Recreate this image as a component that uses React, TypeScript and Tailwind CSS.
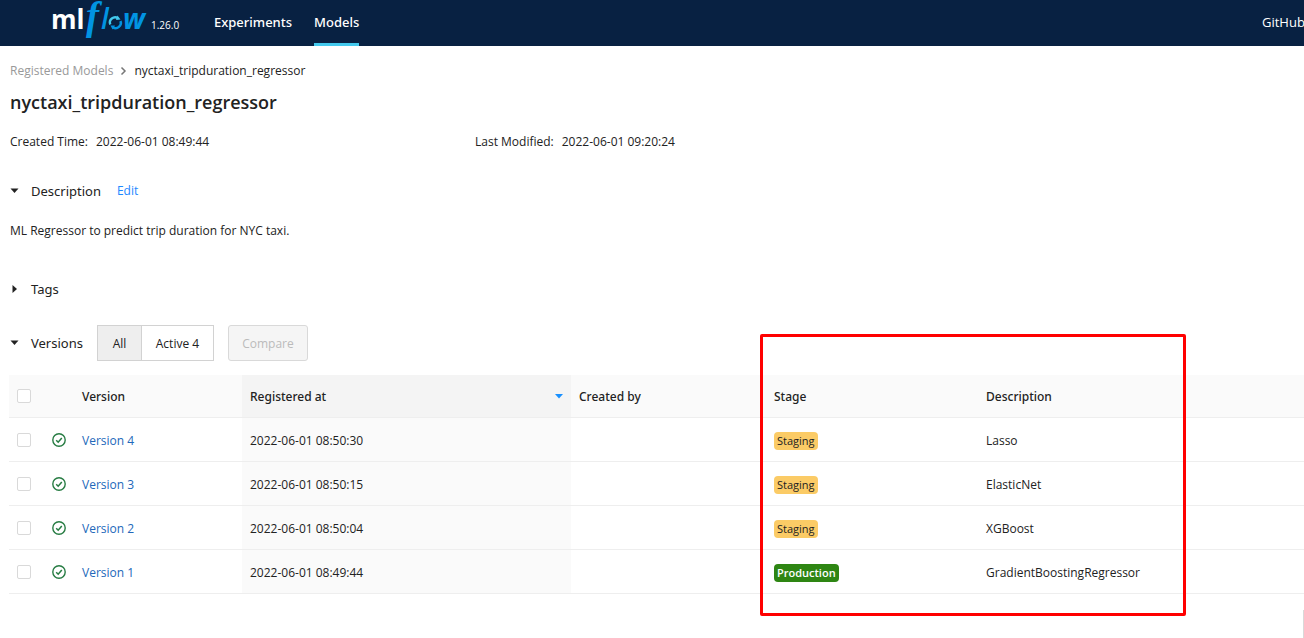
import React from "react";

type Stage = "Staging" | "Production";

interface ModelVersion {
  version: number;
  registeredAt: string;
  stage: Stage;
  description: string;
}

const versions: ModelVersion[] = [
  { version: 4, registeredAt: "2022-06-01 08:50:30", stage: "Staging", description: "Lasso" },
  { version: 3, registeredAt: "2022-06-01 08:50:15", stage: "Staging", description: "ElasticNet" },
  { version: 2, registeredAt: "2022-06-01 08:50:04", stage: "Staging", description: "XGBoost" },
  { version: 1, registeredAt: "2022-06-01 08:49:44", stage: "Production", description: "GradientBoostingRegressor" },
];

const checkboxClass =
  "block h-[14px] w-[14px] appearance-none rounded-[2px] border border-[#d9d9d9] bg-white checked:bg-[#1890ff]";

const headingClass = "px-2 pt-px font-['Noto_Sans',sans-serif] font-medium";

function Logo() {
  return (
    <svg width="96" height="46" viewBox="0 0 96 46" role="img" aria-label="mlflow" className="block shrink-0 overflow-visible">
      <text x="-1" y="29" fontFamily="Open Sans, sans-serif" fontSize="26" fontWeight="700" fill="#fff">
        ml
      </text>
      <text x="34" y="29" fontFamily="Liberation Serif, serif" fontSize="39" fontStyle="italic" fontWeight="700" fill="#0194e2">
        f
      </text>
      <text x="49" y="29" fontFamily="Open Sans, sans-serif" fontSize="28" fontStyle="italic" fontWeight="600" fill="#0194e2">
        l
      </text>
      <g fill="none" strokeWidth="2.4">
        <path d="M58.300 24.500A5.200 5.200 0 0 1 66 18.200" stroke="#43c9ed" />
        <path d="M68.500 21A5.200 5.200 0 0 1 60.800 27.200" stroke="#0194e2" />
      </g>
      <path d="M65.500 15.500L68.500 19.500L64 20Z" fill="#43c9ed" />
      <path d="M58.500 25.500L63 25.500L60.500 29.500Z" fill="#0194e2" />
      <text x="71" y="29" fontFamily="Open Sans, sans-serif" fontSize="28" fontStyle="italic" fontWeight="700" fill="#0194e2">
        w
      </text>
    </svg>
  );
}

function Caret({ open }: { open: boolean }) {
  return (
    <svg width="9" height="10" viewBox="0 0 9 10" aria-hidden="true" className="shrink-0 fill-[#222]">
      {open ? <path d="M0.500 2.500H8.500L4.500 7Z" /> : <path d="M2.500 1L7 5L2.500 9Z" />}
    </svg>
  );
}

function SectionToggle({ title, open }: { title: string; open: boolean }) {
  return (
    <button type="button" aria-expanded={open} className="flex items-center gap-3 font-['Noto_Sans',sans-serif] text-[13px] leading-5">
      <Caret open={open} />
      {title}
    </button>
  );
}

function CheckCircle() {
  return (
    <svg width="14" height="14" viewBox="0 0 14 14" fill="none" stroke="#277c43" role="img" aria-label="Ready" className="block">
      <circle cx="7" cy="7" r="6.200" strokeWidth="1.400" />
      <path d="M4.200 7.200L6.200 9.200L9.800 4.900" strokeWidth="1.500" />
    </svg>
  );
}

function StageTag({ stage }: { stage: Stage }) {
  return stage === "Staging" ? (
    <span className="block h-[18px] w-fit rounded bg-[#fbcb66] px-[3px] text-[11px] leading-[17px]">{stage}</span>
  ) : (
    <span className="block h-[18px] w-fit rounded bg-[#2e8613] px-[3px] text-[11px] font-semibold leading-[17px] text-white">
      {stage}
    </span>
  );
}

export default function App() {
  return (
    <div className="overflow-hidden bg-white font-['Open_Sans',sans-serif] text-xs text-[#222]">
      <header className="flex h-[46px] bg-[#082142] pl-[52px] text-[13px] text-white">
        <Logo />
        <span className="ml-[3px] w-8 pt-[17px] text-[10px] leading-4">1.26.0</span>
        <nav className="ml-[31px] flex gap-[22px] font-['Noto_Sans',sans-serif] font-medium">
          <a href="#experiments" className="leading-[44px]">Experiments</a>
          <a href="#models" aria-current="page" className="border-b-[3px] border-[#43c9ed] leading-[44px]">Models</a>
        </nav>
        <a href="#github" className="ml-auto w-[42px] overflow-hidden whitespace-nowrap leading-[44px]">GitHub</a>
      </header>

      <main className="pl-[9px]">
        <div className="pl-px">
          <nav aria-label="Breadcrumb" className="flex items-center gap-[7px] pt-4 leading-[18px]">
            <a href="#registered" className="text-[#999]">Registered Models</a>
            <svg width="7" height="10" viewBox="0 0 7 10" fill="none" stroke="#777" strokeWidth="1.500" aria-hidden="true">
              <path d="M1.500 1.500L5 5L1.500 8.500" />
            </svg>
            <span>nyctaxi_tripduration_regressor</span>
          </nav>
          <h1 className="pt-2 text-[18px] font-semibold leading-7">nyctaxi_tripduration_regressor</h1>

          <dl className="flex pt-[17px] leading-[18px]">
            <div className="flex w-[465px] gap-2">
              <dt>Created Time:</dt>
              <dd>2022-06-01 08:49:44</dd>
            </div>
            <div className="flex gap-2">
              <dt>Last Modified:</dt>
              <dd>2022-06-01 09:20:24</dd>
            </div>
          </dl>

          <section className="pt-[30px]">
            <div className="flex items-center gap-4">
              <SectionToggle title="Description" open />
              <button type="button" className="leading-5 text-[#1e88ff]">Edit</button>
            </div>
            <p className="pt-[21px] leading-[18px]">ML Regressor to predict trip duration for NYC taxi.</p>
          </section>

          <section className="pt-[39px]">
            <SectionToggle title="Tags" open={false} />
          </section>
        </div>

        <section className="relative pt-[26px]">
          <div className="flex items-center pl-px">
            <SectionToggle title="Versions" open />
            <div className="ml-[14px] flex h-9">
              <button type="button" aria-pressed="true" className="w-[45px] border border-[#d2d2d2] bg-[#eee] pt-px">All</button>
              <button type="button" aria-pressed="false" className="w-[72px] border border-l-0 border-[#d2d2d2] bg-white pt-px">Active 4</button>
            </div>
            <button type="button" disabled className="ml-[14px] h-9 w-20 rounded-[3px] border border-[#d9d9d9] bg-[#f5f5f5] pt-px text-[#bbb]">
              Compare
            </button>
          </div>

          <table className="mt-[14px] w-full table-fixed border-separate border-spacing-0 text-left">
            <colgroup>
              <col className="w-[33px]" />
              <col className="w-8" />
              <col className="w-[168px]" />
              <col className="w-[329px]" />
              <col className="w-[195px]" />
              <col className="w-[212px]" />
              <col />
            </colgroup>
            <thead>
              <tr className="h-[43px] bg-[#fafafa] *:border-b *:border-[#eee]">
                <th className="px-2"><input type="checkbox" aria-label="Select all versions" className={checkboxClass} /></th>
                <th aria-label="Status" />
                <th className={headingClass}>Version</th>
                <th aria-sort="descending" className={`${headingClass} bg-[#f4f4f4]`}>
                  <button type="button" className="flex w-full items-center justify-between">
                    Registered at
                    <svg width="8" height="6" viewBox="0 0 8 6" aria-hidden="true" className="fill-[#1890ff]">
                      <path d="M0 0H8L4 4.500Z" />
                    </svg>
                  </button>
                </th>
                <th className={headingClass}>Created by</th>
                <th className={headingClass}>Stage</th>
                <th className={headingClass}>Description</th>
              </tr>
            </thead>
            <tbody>
              {versions.map((row) => (
                <tr key={row.version} className="h-11 *:border-b *:border-[#eee]">
                  <td className="px-2">
                    <input type="checkbox" aria-label={`Select version ${row.version}`} className={checkboxClass} />
                  </td>
                  <td className="pl-[10px]"><CheckCircle /></td>
                  <td className="px-2 pt-[3px]"><a href={`#version-${row.version}`} className="text-[#2268ba]">Version {row.version}</a></td>
                  <td className="bg-[#fafafa] px-2 pt-[3px]">{row.registeredAt}</td>
                  <td />
                  <td className="px-2 pt-[3px]"><StageTag stage={row.stage} /></td>
                  <td className="px-2 pt-[3px]">{row.description}</td>
                </tr>
              ))}
            </tbody>
          </table>

          <div className="pointer-events-none absolute -bottom-[22px] left-[751px] top-[35px] w-[426px] rounded-[2px] border-[3px] border-[#ff0000]" />
        </section>

        <div className="flex justify-end pt-4">
          <button type="button" aria-label="Previous page" className="h-7 w-px bg-[#d9d9d9]" />
        </div>
      </main>
    </div>
  );
}
